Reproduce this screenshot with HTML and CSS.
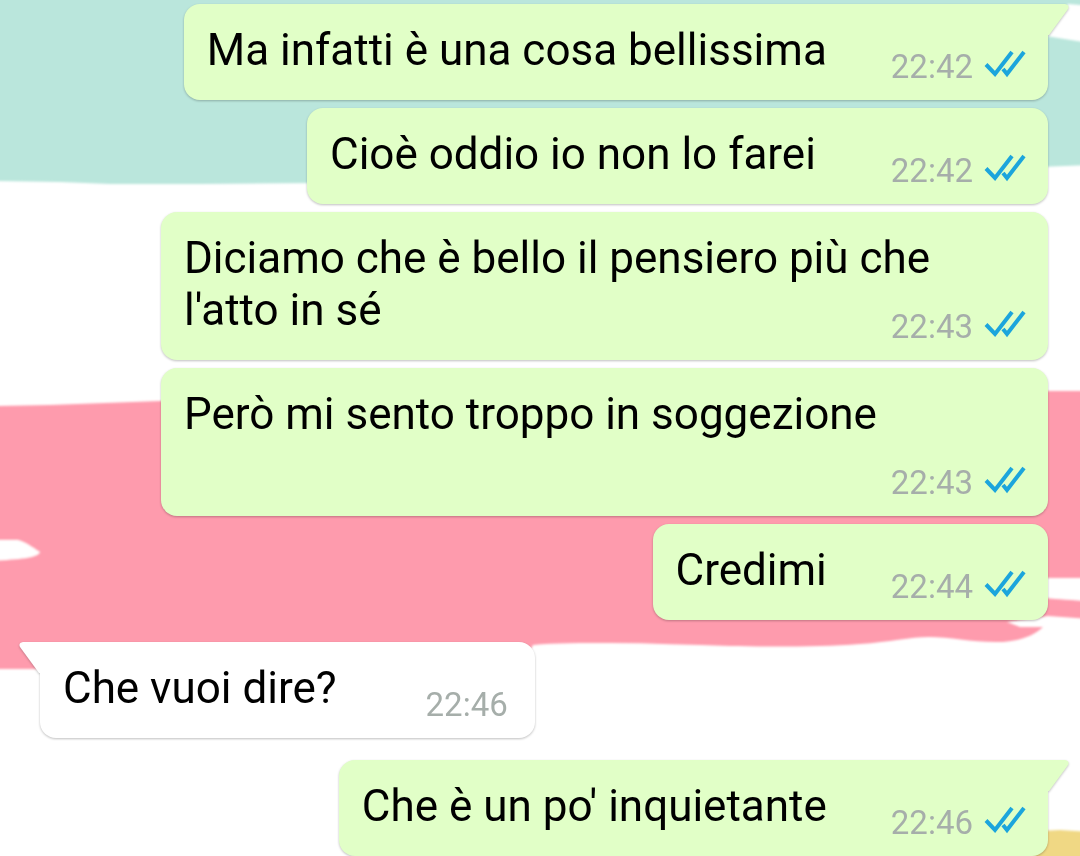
FILE: index.html
```html
<!DOCTYPE html>
<html lang="it">
<head>
<meta charset="utf-8">
<meta name="viewport" content="width=device-width, initial-scale=1">
<title>Chat</title>
<link rel="stylesheet" href="styles.css">
</head>
<body>
<svg class="wallpaper" viewBox="0 0 1080 856" preserveAspectRatio="none" aria-hidden="true">
  <defs>
    <filter id="soft" x="-5%" y="-5%" width="110%" height="110%"><feGaussianBlur stdDeviation="1"/></filter>
  </defs>
  <g filter="url(#soft)">
    <path fill="#bae6dc" d="M-10-10H1090V6L1068 4L1046 36L1090 43V165L1040 167L700 180L200 184L110 184L60 182L-10 181Z"/>
    <path fill="#fe9bad" d="M-10 406L50 405L160 401L600 394L1048 391H1090V578H1040V597C1055 600 1070 599 1090 602V619L1048 616L1007 622L1020 627H1043C1034 636 1018 642 996 642C970 642 950 637 929 637C910 637 890 642 860 644C820 647 770 647 730 646C690 645 650 643 611 643C580 643 555 643 533 645L520 669H-10Z"/>
    <path fill="#fff" d="M-10 540H18C28 543 36 550 40 552C37 558 22 559-10 561Z"/>
    <path fill="#f0d884" d="M1020 832L1060 830L1090 832V866H1020Z"/>
  </g>
</svg>

<svg class="symbols" aria-hidden="true">
  <symbol id="ticks" viewBox="0 0 42 28">
    <g fill="none" stroke="#1ca5dc" stroke-width="4">
      <path d="M2 14.500L11 24L28 2"/>
      <path d="M19 19L23 24L40 2"/>
    </g>
  </symbol>
  <symbol id="tail" viewBox="0 0 21 32">
    <path d="M0 0H17Q22 1 20 5L1 31H0Z"/>
  </symbol>
</svg>

<main class="feed">
  <article class="bubble out">
    <svg class="tail"><use href="#tail"/></svg>
    <div class="text">Ma infatti è una cosa bellissima<span class="meta"><time>22:42</time><svg class="ticks" role="img" aria-label="Letto"><use href="#ticks"/></svg></span></div>
  </article>
  <article class="bubble out">
    <div class="text">Cioè oddio io non lo farei&nbsp;<span class="meta"><time>22:42</time><svg class="ticks" role="img" aria-label="Letto"><use href="#ticks"/></svg></span></div>
  </article>
  <article class="bubble out">
    <div class="text">Diciamo che è bello il pensiero più che l'atto in sé<span class="meta"><time>22:43</time><svg class="ticks" role="img" aria-label="Letto"><use href="#ticks"/></svg></span></div>
  </article>
  <article class="bubble out">
    <div class="text">Però mi sento troppo in soggezione<span class="meta"><time>22:43</time><svg class="ticks" role="img" aria-label="Letto"><use href="#ticks"/></svg></span></div>
  </article>
  <article class="bubble out">
    <div class="text">Credimi<span class="meta"><time>22:44</time><svg class="ticks" role="img" aria-label="Letto"><use href="#ticks"/></svg></span></div>
  </article>
  <article class="bubble in turn">
    <svg class="tail"><use href="#tail"/></svg>
    <div class="text">Che vuoi dire?<span class="meta"><time>22:46</time></span></div>
  </article>
  <article class="bubble out turn">
    <svg class="tail"><use href="#tail"/></svg>
    <div class="text">Che è un po' inquietante<span class="meta"><time>22:46</time><svg class="ticks" role="img" aria-label="Letto"><use href="#ticks"/></svg></span></div>
  </article>
</main>
</body>
</html>
```

FILE: styles.css
```css
* {
  box-sizing: border-box;
}

body {
  position: relative;
  min-height: 100vh;
  margin: 0;
  background: #fff;
  color: #000;
  font-family: Roboto, "Liberation Sans", sans-serif;
}

.wallpaper {
  position: absolute;
  inset: 0;
  width: 100%;
  height: 100%;
}

.symbols {
  position: absolute;
  width: 0;
  height: 0;
}

.feed {
  position: relative;
  display: flex;
  flex-direction: column;
  gap: 8px;
  padding: 4px 32px 0 40px;
}

.bubble {
  position: relative;
  max-width: 88%;
  padding: 20px 22px 13px 23px;
  border-radius: 16px;
  filter: drop-shadow(0 1px 1px rgba(0, 0, 0, 0.25));
}

.out {
  align-self: flex-end;
  background: #e1ffc7;
  fill: #e1ffc7;
}

.in {
  align-self: flex-start;
  background: #fff;
  fill: #fff;
}

.turn {
  margin-top: 14px;
}

.text {
  display: flow-root;
  font-size: 44px;
  line-height: 52px;
}

/* Sits beside the last line when it fits, otherwise drops below it. */
.meta {
  float: right;
  display: flex;
  align-items: center;
  gap: 11px;
  margin: 23px 0 0 64px;
  color: #a6aeaa;
  font-size: 33px;
  line-height: 40px;
}

.in .meta {
  margin-left: 89px;
  margin-right: 5px;
}

.ticks {
  width: 42px;
  height: 28px;
  margin-bottom: 6px;
}

.tail {
  position: absolute;
  top: 0;
  width: 21px;
  height: 32px;
}

.out .tail {
  left: 100%;
}

.in .tail {
  right: 100%;
  transform: scaleX(-1);
}

.out:has(.tail) {
  border-top-right-radius: 0;
}

.in:has(.tail) {
  border-top-left-radius: 0;
}
```
